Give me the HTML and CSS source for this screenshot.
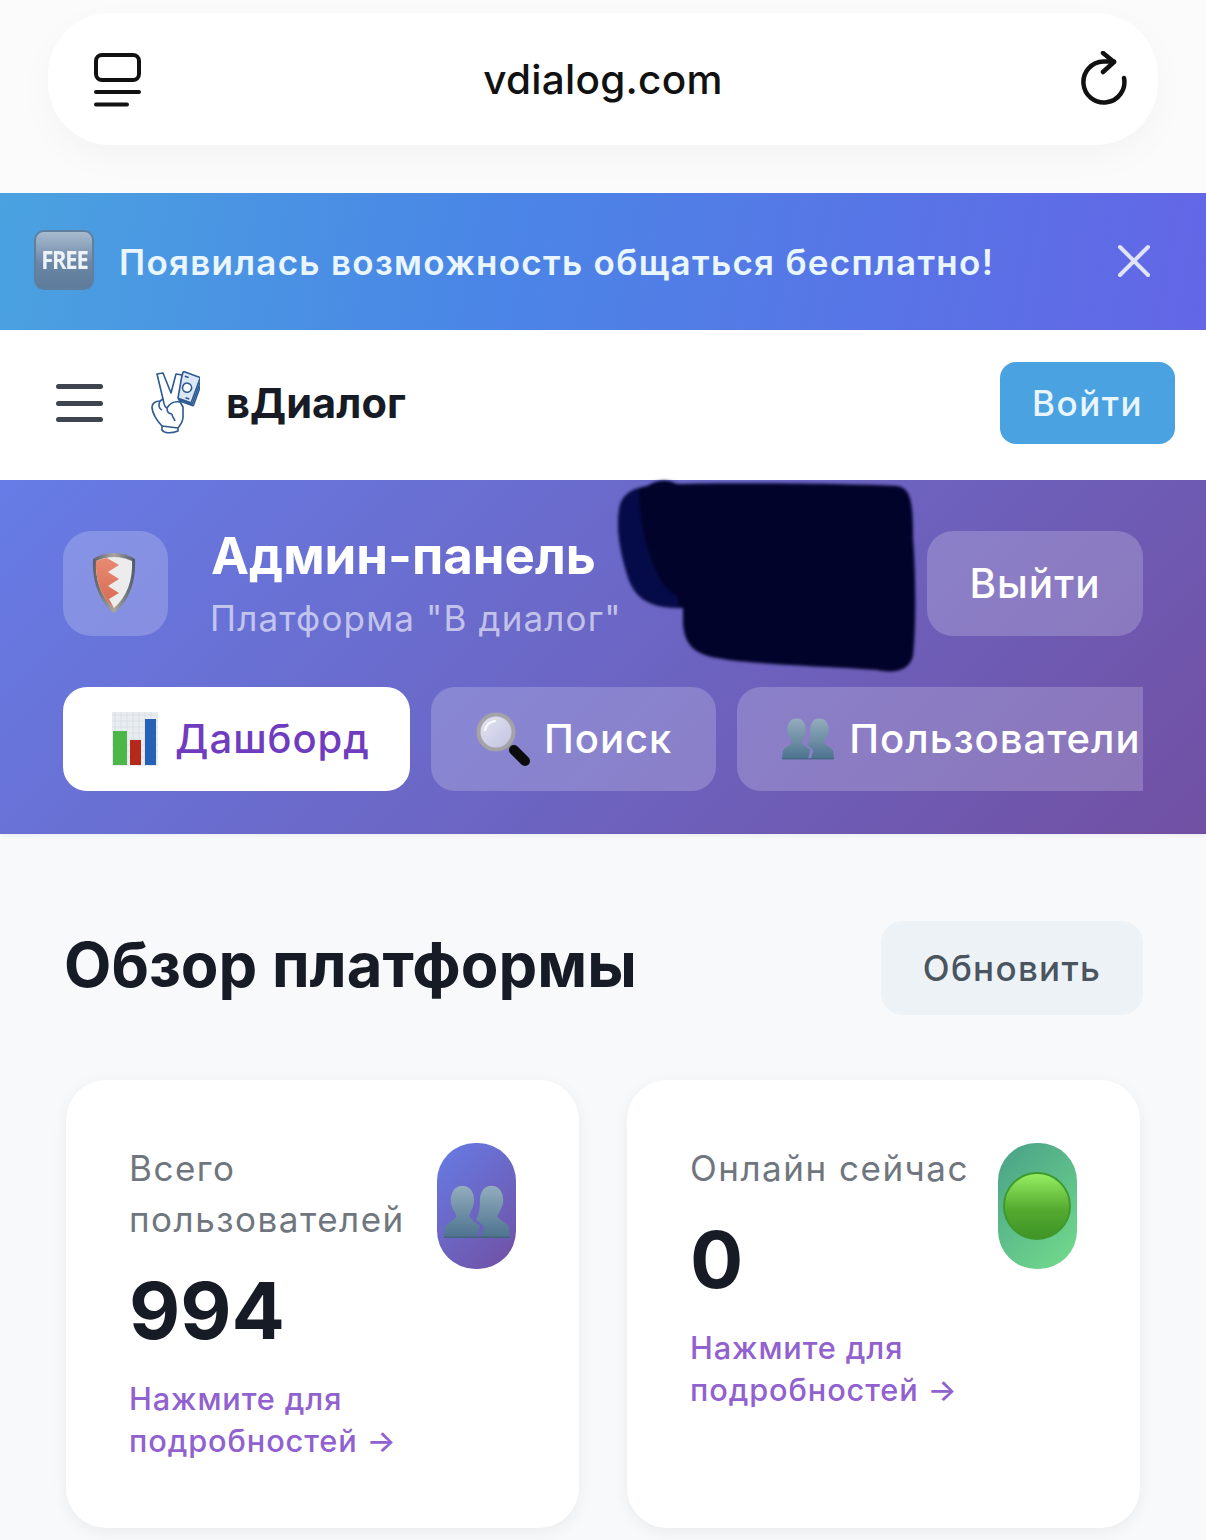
FILE: index.html
```html
<!DOCTYPE html>
<html lang="ru">
<head>
<meta charset="utf-8">
<title>вДиалог</title>
<link rel="stylesheet" href="styles.css">
</head>
<body>
<svg class="defs" width="0" height="0" aria-hidden="true">
  <defs>
    <linearGradient id="bust" x1="0" y1="0" x2="0" y2="1"><stop offset="0" stop-color="#93adbd"/><stop offset="1" stop-color="#4d7390"/></linearGradient>
    <linearGradient id="lens" x1="0" y1="0" x2="1" y2="1"><stop offset="0" stop-color="#e6e6f2"/><stop offset="1" stop-color="#bfc0e0"/></linearGradient>
    <linearGradient id="coral" x1="0" y1="0" x2="0" y2="1"><stop offset="0" stop-color="#e88a72"/><stop offset="1" stop-color="#d86a52"/></linearGradient>
    <linearGradient id="rim" x1="0" y1="0" x2="1" y2="0"><stop offset="0" stop-color="#5a5f66"/><stop offset=".5" stop-color="#a9a6a0"/><stop offset="1" stop-color="#4d5a68"/></linearGradient>
    <symbol id="busts" viewBox="0 0 68 54"><path d="M19 0C27 0 31 7 31 15C31 22 27 27 26 31C28 36 34 38 37 41L34 53H0L1 43C3 38 11 36 13 31C11 27 7 22 7 15C7 7 11 0 19 0ZM49 0C57 0 61 7 61 15C61 22 57 27 55 31C57 36 65 38 67 43L68 53H38L41 42C38 38 35 37 33 35C36 30 37 24 37 15C37 7 41 0 49 0Z" fill="url(#bust)"/><path d="M0 53H68" stroke="#44647e" stroke-width="1.500"/></symbol>
  </defs>
</svg>
<div class="page">
  <header class="browser">
    <div class="pill">
      <svg class="tabs-ic" viewBox="0 0 48 56" width="48" height="56"><rect x="2" y="2" width="43" height="25" rx="6" fill="none" stroke="#111" stroke-width="4"/><path d="M2 39H45M2 51.500H33" stroke="#111" stroke-width="4" stroke-linecap="round"/></svg>
      <span class="url">vdialog.com</span>
      <svg class="reload" viewBox="0 0 48 56" width="48" height="56"><path d="M43 27A20.500 20.500 0 1 1 22.500 10.500H33" fill="none" stroke="#111" stroke-width="4.500" stroke-linecap="round"/><path d="M22 2L33 11L22 21" fill="none" stroke="#111" stroke-width="4.500" stroke-linecap="round" stroke-linejoin="round"/></svg>
    </div>
  </header>

  <section class="banner">
    <div class="free"><span>FREE</span></div>
    <p class="banner-text">Появилась возможность общаться бесплатно!</p>
    <svg class="close" viewBox="0 0 34 34" width="34" height="34"><path d="M3 3L31 31M31 3L3 31" stroke="#dfe4fb" stroke-width="4" stroke-linecap="round"/></svg>
  </section>

  <nav class="nav">
    <div class="burger"><i></i><i></i><i></i></div>
    <svg class="logo" viewBox="0 0 50 64" width="50" height="64">
      <g stroke="#2d5a92" stroke-width="1.600" stroke-linejoin="round">
        <g transform="rotate(20 38 17)">
          <rect x="31" y="5" width="18" height="27" rx="1" fill="#fff"/>
          <rect x="29.500" y="4" width="18" height="27" rx="1" fill="#fff"/>
          <rect x="28" y="3" width="18" height="27" rx="1" fill="#dbe7f4"/>
          <circle cx="37" cy="17" r="4.500" fill="#fff"/>
          <path d="M31 7L35 7M39 27L43 27"/>
        </g>
        <path fill="#fff" d="M7 3L13 2L21 22L26 3L32 4L28 27L33 36L33 46C33 52 29 55 28 57L28 60C20 63 14 62 12 59L12 55C7 50 2 42 2 36C2 32 6 30 10 30L13 28Z"/>
        <path fill="none" d="M10 30C8 34 9 38 12 39M13 28C14 32 14 36 17 37C20 32 25 30 30 31M17 37C17 41 19 43 22 43M22 43C22 46 24 47 25 50M12 55L28 57"/>
      </g>
    </svg>
    <span class="brand">вДиалог</span>
    <button class="login">Войти</button>
  </nav>

  <section class="admin">
    <div class="admin-top">
      <div class="shield-box">
        <svg class="shield" viewBox="0 0 44 62" width="44" height="62">
          <path d="M22 1C30 1 37 3 43 7C44 27 38 49 22 61C6 49 0 27 1 7C7 3 14 1 22 1Z" fill="url(#rim)"/>
          <path d="M22 5C29 5 35 7 40 9C41 27 35 45 22 56C9 45 3 27 4 9C9 7 15 5 22 5Z" fill="#ececec"/>
          <path d="M15 6L27 13L16 20L27 27L16 34L27 41L17 47L22 56C9 45 3 27 4 9C7 7.500 11 6.500 15 6Z" fill="url(#coral)"/>
        </svg>
      </div>
      <div class="admin-titles">
        <h1>Админ-панель</h1>
        <p>Платформа "В диалог"</p>
      </div>
      <button class="logout">Выйти</button>
    </div>
    <div class="tabs">
      <button class="tab tab-active">
        <svg viewBox="0 0 46 54" width="46" height="54"><rect width="46" height="54" fill="#e9edf2"/><path d="M0 3H46M0 9H46M0 15H46M0 21H46M0 27H46M0 33H46M0 39H46M0 45H46M3 0V54M9 0V54M15 0V54M21 0V54M27 0V54M33 0V54M39 0V54" stroke="#d5dbe3" stroke-width=".7"/><rect x="1" y="19" width="14" height="34" fill="#4cb748"/><rect x="18" y="28" width="11" height="25" fill="#b5291b"/><rect x="33" y="7" width="11" height="46" fill="#2761b5"/></svg>
        Дашборд
      </button>
      <button class="tab tab-search">
        <svg viewBox="0 0 54 54" width="54" height="54"><path d="M34 34L38 38" stroke="#8a8a8e" stroke-width="6"/><path d="M38 38L49 49" stroke="#0c0c0e" stroke-width="10" stroke-linecap="round"/><circle cx="20" cy="20" r="17.500" fill="url(#lens)" stroke="#a3a3a8" stroke-width="4"/><path d="M9 18A11 11 0 0 1 19 9" fill="none" stroke="#fff" stroke-width="2" stroke-linecap="round"/></svg>
        Поиск
      </button>
      <button class="tab">
        <svg viewBox="0 0 68 54" width="52" height="42"><use href="#busts"/></svg>
        Пользователи
      </button>
    </div>
  </section>

  <div class="redaction">
    <svg viewBox="0 0 300 196" width="300" height="196"><path d="M30 8C40 2 48 0 60 6C120 4 250 6 280 8C294 10 296 24 296 60C299 100 299 150 296 178C292 192 280 196 260 192C200 188 130 186 100 180C76 176 68 166 66 146L66 130C40 130 18 126 10 96C2 70 -2 40 4 24C10 12 20 10 30 8Z" fill="#02032a"/><path d="M22 10C12 14 6 20 4 28C-2 44 2 70 10 96C18 122 36 128 62 130L60 118C40 110 22 60 22 10Z" fill="#050b48"/></svg>
  </div>

  <main class="content">
    <div class="head-row">
      <h2>Обзор платформы</h2>
      <button class="refresh">Обновить</button>
    </div>
    <div class="cards">
      <article class="card">
        <div class="card-body">
          <div class="label">Всего пользователей</div>
          <div class="value">994</div>
          <a class="more">Нажмите для подробностей →</a>
        </div>
        <div class="badge badge-purple">
          <svg class="busts-ic" viewBox="0 0 68 54" width="66" height="54"><use href="#busts"/></svg>
        </div>
      </article>
      <article class="card">
        <div class="card-body">
          <div class="label">Онлайн сейчас</div>
          <div class="value">0</div>
          <a class="more">Нажмите для подробностей →</a>
        </div>
        <div class="badge badge-green">
          <span class="green-dot"></span>
        </div>
      </article>
    </div>
  </main>
</div>
</body>
</html>
```

FILE: styles.css
```css
* { box-sizing: border-box; }
html, body { margin: 0; padding: 0; }
body { width: 1206px; height: 1540px; overflow: hidden; background: #f7f9fb; font-family: Inter, "Noto Sans", "Liberation Sans", sans-serif; }
button { font-family: inherit; border: 0; cursor: pointer; }
h1, h2, p { margin: 0; }
.defs { position: absolute; }
.page { position: relative; width: 1206px; height: 1540px; overflow: hidden; }

.browser { height: 193px; padding: 13px 48px 0; background: #fbfbfb; }
.pill { height: 132px; border-radius: 62px; background: #fff; display: flex; align-items: center; padding: 0 30px 0 46px; box-shadow: 0 12px 36px rgba(0,0,0,.03); }
.url { flex: 1; text-align: center; font-size: 40.500px; font-weight: 500; color: #111; letter-spacing: .25px; padding-right: 16px; }
.tabs-ic { margin-top: 3px; }
.reload { margin: 0 -1px 0 1px; }

.banner { height: 137px; display: flex; align-items: center; padding: 0 55px 0 34px; background: linear-gradient(100deg, #4aa2e0 0%, #4a86e6 40%, #6366e6 100%); }
.free { width: 60px; height: 60px; margin-top: -3px; border-radius: 10px; background: linear-gradient(#a8bcd0, #6d87a6 55%, #5d7b9b); border: 2px solid #5f7f9e; display: flex; align-items: center; justify-content: center; }
.free span { font-family: "Open Sans", sans-serif; font-weight: 700; font-size: 25px; line-height: 1; color: #eef3f8; letter-spacing: -1.400px; transform: scaleX(.88); margin-top: -2px; }
.banner-text { flex: 1; margin-left: 25px; font-size: 35px; font-weight: 600; color: #eaf6ff; letter-spacing: 1.280px; }
.close { margin-top: -1px; }

.nav { height: 150px; background: #fff; display: flex; align-items: center; padding: 0 31px 4px 56px; }
.burger { width: 47px; display: flex; flex-direction: column; gap: 11.500px; }
.burger i { display: block; height: 5px; border-radius: 3px; background: #3f4550; }
.logo { margin-left: 47px; }
.brand { flex: 1; margin-left: 26px; font-size: 41.500px; font-weight: 700; color: #161b26; letter-spacing: .1px; }
.login { width: 175px; height: 82px; border-radius: 16px; background: #4aa3e0; color: #eaf6ff; font-size: 35px; font-weight: 500; letter-spacing: 1.500px; }

.admin { height: 354px; padding: 51px 63px 0; background: linear-gradient(135deg, #667ce6 0%, #7150a3 100%); box-shadow: 0 2px 4px rgba(0,0,0,.05); position: relative; }
.admin-top { display: flex; align-items: center; height: 105px; }
.shield-box { width: 105px; height: 105px; border-radius: 28px; background: rgba(255,255,255,.2); display: flex; align-items: center; justify-content: center; }
.shield { margin: -2px 4px 0 0; }
.admin-titles { flex: 1; margin-left: 43px; }
.admin-titles h1 { font-size: 51px; line-height: 56px; font-weight: 700; color: #fff; }
.admin-titles p { font-size: 35px; line-height: 42px; color: rgba(255,255,255,.6); margin: 13px 0 0 -1px; letter-spacing: 1.150px; white-space: nowrap; }
.logout { width: 216px; height: 105px; border-radius: 26px; background: rgba(255,255,255,.2); color: #fff; font-size: 40.500px; font-weight: 500; letter-spacing: 1px; padding-bottom: 2px; }
.tabs { display: flex; gap: 21px; margin-top: 51px; overflow: hidden; height: 104px; }
.tab { flex: none; height: 104px; border-radius: 24px; background: rgba(255,255,255,.2); color: #fff; font-size: 40px; font-weight: 500; letter-spacing: 1px; padding: 0 44px 2px 45px; display: flex; align-items: center; gap: 15px; white-space: nowrap; }
.tab svg { margin-top: 2px; }
.tab-active { background: #fff; color: #6f3cc0; padding: 0 40px 2px 49px; gap: 17px; }
.tab-search { gap: 14px; }

.redaction { position: absolute; left: 617px; top: 478px; line-height: 0; filter: blur(1.500px); }

.content { padding: 87px 66px 0 64px; }
.head-row { display: flex; align-items: center; justify-content: space-between; height: 94px; }
.head-row h2 { font-size: 61.500px; font-weight: 700; color: #161b26; line-height: 1; padding-bottom: 7px; }
.refresh { width: 262px; height: 94px; margin-right: -3px; border-radius: 22px; background: #edf2f7; color: #4a5560; font-size: 35px; font-weight: 500; letter-spacing: 1.300px; }

.cards { display: grid; grid-template-columns: 513px 513px; gap: 48px; margin: 65px 0 0 2px; }
.card { height: 448px; border-radius: 40px; background: #fff; padding: 63px 63px 0 63px; display: flex; justify-content: space-between; align-items: flex-start; box-shadow: 0 4px 16px rgba(0,0,0,.06); }
.card-body { width: 290px; flex: none; }
.label { font-size: 35px; line-height: 51px; color: #6f767e; letter-spacing: 1.500px; }
.value { font-size: 79px; line-height: 90px; font-weight: 700; color: #161b26; margin-top: 20px; }
.more { display: block; font-size: 30.700px; line-height: 42px; color: #9061cf; letter-spacing: .9px; margin-top: 23px; font-weight: 500; }
.badge { width: 79px; height: 126px; flex: none; border-radius: 38px; display: flex; align-items: center; justify-content: center; overflow: hidden; }
.busts-ic { flex: none; margin-top: 12px; }
.badge-purple { background: linear-gradient(135deg, #667ce6, #7150a3); }
.badge-green { background: linear-gradient(135deg, #48a088, #74dc8c); }
.green-dot { width: 68px; height: 68px; flex: none; margin: 0 2px 0 0; border-radius: 50%; background: linear-gradient(#96ee62, #55ab30 55%, #3f9426); border: 2px solid #3e9a2c; }
```
